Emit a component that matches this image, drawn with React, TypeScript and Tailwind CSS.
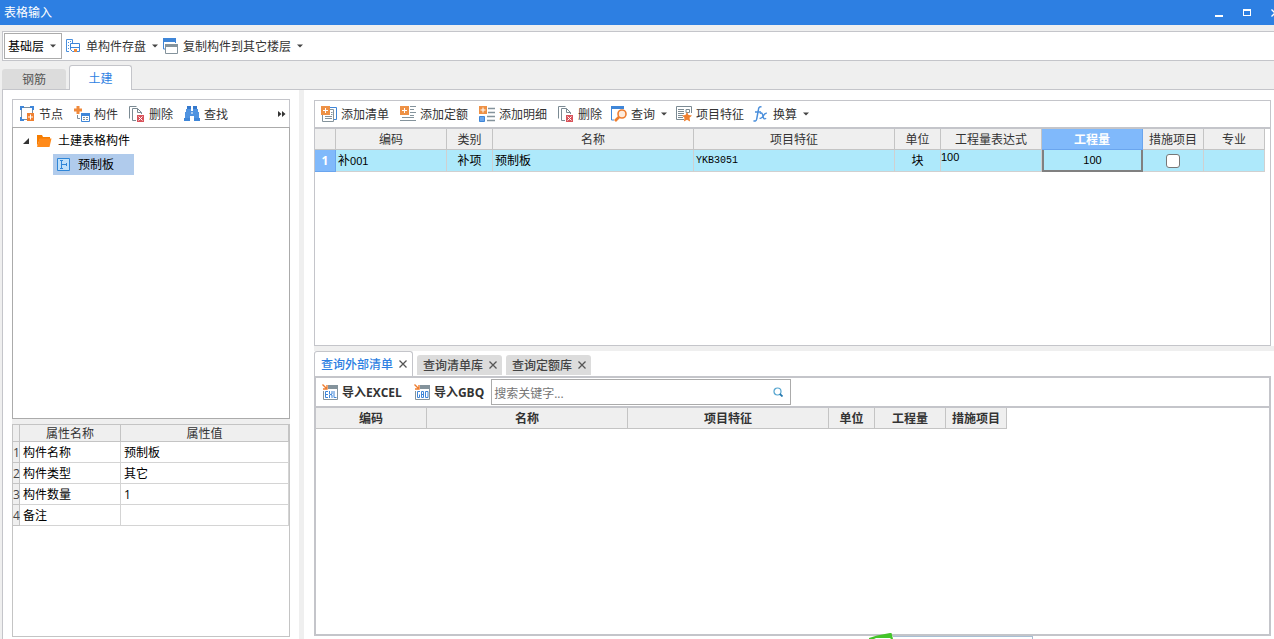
import React, { useState } from 'react';

interface IconProps {
  className?: string;
}

interface Column {
  label: string;
  width: string;
}

const Svg: React.FC<{ children: React.ReactNode; className?: string }> = ({ children, className = 'w-4 h-4' }) => (
  <svg viewBox="0 0 16 16" className={`${className} shrink-0`} fill="none" aria-hidden="true">
    {children}
  </svg>
);

const Caret: React.FC<IconProps> = ({ className = '' }) => (
  <svg viewBox="0 0 6 4" className={`w-1.5 h-1 shrink-0 ${className}`} aria-hidden="true">
    <path d="M0 0.5h6L3 3.5z" fill="#444" />
  </svg>
);

const SaveUnitIcon = () => (
  <Svg>
    <path d="M3 13.5H.5V1.500h6V5" stroke="#4a8fdc" />
    <path d="M2 4.500h1M2 7.500h1M2 10.500h1M4 3.500h1M4 6.500h1" stroke="#4a8fdc" />
    <path d="M4.500 5.500h9v8h-7l-2-2z" stroke="#3f86d8" fill="#fff" />
    <path d="M5 9.500h8" stroke="#3f86d8" />
    <path d="M8 11h3v3H8z" fill="#ee8a3a" />
  </Svg>
);

const CopyFloorIcon = () => (
  <Svg>
    <path d="M.5 1v10H2M12.500 1v4" stroke="#3f86d8" />
    <path d="M0 0h13v4H0z" fill="#3f86d8" />
    <path d="M2.500 6.500h12v9h-12z" stroke="#84939c" fill="#fff" />
    <path d="M2 6h13v3H2z" fill="#84939c" />
  </Svg>
);

const NodeIcon = () => (
  <Svg>
    <path d="M4 1.500h8M2.500 4v7M13.500 4v3M4 13.500h4" stroke="#7e8f9c" />
    <path d="M1 0h4v4H1zM11 0h4v4h-4zM1 11h4v4H1z" fill="#3f86d8" />
    <path d="M3 2h10v11H3z" fill="#fff" />
    <path d="M8 7h7v8H8z" fill="#f08030" />
    <path d="M11.500 8.500v5M9 11h5" stroke="#fff" />
  </Svg>
);

const ComponentIcon = () => (
  <Svg>
    <path d="M2.500 0h3v2.500H8v3H5.500V8h-3V5.500H0v-3h2.500z" fill="#f08a3c" />
    <path d="M3.500 9v3.500H6" stroke="#7e8f9c" />
    <path d="M7.500 7.500h8v8h-8z" stroke="#3f86d8" fill="#fff" />
    <path d="M7 7h9v3H7z" fill="#3f86d8" />
    <path d="M9 11.500h2M12 11.500h2M9 13.500h2M12 13.500h2" stroke="#84939c" />
  </Svg>
);

const DeleteIcon = () => (
  <Svg>
    <path d="M.5 12.500v-12h7" stroke="#7b8a93" />
    <path d="M7 14.500H3.500v-12h5l4 4V8M8.500 2.500v4h4" stroke="#7b8a93" />
    <path d="M8 9h7v7H8z" fill="#d9535b" />
    <path d="M9.500 10.500l4 4M13.500 10.500l-4 4" stroke="#fff" />
  </Svg>
);

const BinocularsIcon = () => (
  <Svg>
    <path d="M3 0h4v3H3zM9 0h4v3H9z" fill="#3478cc" />
    <path d="M2 3h5v2h2V3h5v3h1v9h-5v-5H6v5H1V6h1z" fill="#4f93e0" />
    <path d="M0 12h6v3H0zM10 12h6v3h-6z" fill="#3f86d8" />
    <path d="M7.500 6h1v2h-1z" fill="#fff" />
  </Svg>
);

const AddListIcon = () => (
  <Svg>
    <path d="M9 1.500h6.500v12H13" stroke="#3f86d8" />
    <path d="M9 3.500h3.500v12H1.500V9" stroke="#84939c" />
    <path d="M4 10.500h7M4 12.500h7M10 6.500h1.500M10 8.500h1.500" stroke="#84939c" />
    <path d="M0 0h9v9H0z" fill="#ee9145" />
    <path d="M4.500 2v5M2 4.500h5" stroke="#fff" />
  </Svg>
);

const AddQuotaIcon = () => (
  <Svg>
    <path d="M10 .5h6M10 3.500h4M10 6.500h6M10 9.500h4M2 11.500h12M0 14.500h16" stroke="#84939c" />
    <path d="M0 0h9v9H0z" fill="#ee9145" />
    <path d="M4.500 2v5M2 4.500h5" stroke="#fff" />
  </Svg>
);

const AddDetailIcon = () => (
  <Svg>
    <path d="M9 2.500h7M9 6.500h7M8 10.500h8M8 14.500h8" stroke="#84939c" strokeWidth="1.500" />
    <path d="M.5 10.500h5v5h-5z" fill="#69a5ec" stroke="#3f86d8" />
    <path d="M0 0h8v8H0z" fill="#ee9145" />
    <path d="M4 1.500v5M1.500 4h5" stroke="#fff" />
  </Svg>
);

const QueryIcon = () => (
  <Svg>
    <path d="M.5 1v13H3" stroke="#3f86d8" />
    <path d="M0 0h13v3H0z" fill="#3f86d8" />
    <circle cx="11" cy="8" r="4" stroke="#ee7d2f" strokeWidth="1.600" fill="#fdebdd" />
    <path d="M8 11L4 15" stroke="#ee7d2f" strokeWidth="2.600" />
  </Svg>
);

const FeatureIcon = () => (
  <Svg>
    <path d="M8 13.500H.5V.5h15V7" stroke="#7b8a93" />
    <path d="M2 3.500h6M2 5.500h6M2 7.500h6M2 9.500h5M2 11.500h5M10 3.500h3.500v3H10z" stroke="#7b8a93" />
    <path d="M11 6l1.500 3 3.500.5-2.500 2.300.6 3.700-3.100-1.800-3.100 1.800.6-3.700L6 9.500 9.500 9z" fill="#f08030" />
  </Svg>
);

const FunctionIcon = () => (
  <Svg>
    <path d="M8.500 1.200c-1.600-1-2.700 0-3 2L3.700 13c-.3 2-1.600 2.600-3.200 1.600M2 6h6" stroke="#4a8fdc" strokeWidth="1.500" />
    <path d="M6.800 7.500c1.200-1 2.200-.6 2.600.6l1.100 3.600c.4 1.400 1.400 1.500 2.600.5M13.800 7.300c-1.500-.6-2.500.8-3.500 2.600-.9 1.700-1.900 3-3.700 2.300" stroke="#4a8fdc" strokeWidth="1.400" />
  </Svg>
);

const FolderIcon = () => (
  <Svg>
    <path d="M1 13V2h5l1 2h7v2H4z" fill="#f57c00" />
    <path d="M3.500 5.500H15.500L13.500 14H1z" fill="#ff8a1a" />
  </Svg>
);

const SlabIcon = () => (
  <svg viewBox="0 0 13 13" className="h-[13px] w-[13px] shrink-0" fill="none" aria-hidden="true">
    <path d="M.5.5h12v12H.5z" stroke="#2f86d8" fill="#bfe0fa" />
    <path d="M3 2.500h3M3 10.500h3M4.500 3v7M5 6.500h5M9.500 5v3" stroke="#2f86d8" />
  </svg>
);

// The spreadsheet badge shared by the import buttons
const ImportIcon: React.FC<{ kind: 'EXL' | 'GBQ' }> = ({ kind }) => (
  <Svg>
    <path d="M6 1h10v4H6z" fill="#84939c" />
    <path d="M1.500 7v8.500h14V5" stroke="#84939c" />
    <path d="M.5.5l4 4M5 1v4H1" stroke="#ee7d2f" strokeWidth="1.400" />
    {kind === 'EXL' ? (
      <path d="M6 7.500H3.500v6H6M3.500 10.500H6M7.500 7v3l2.500 1v3M10 7v3l-2.500 1v3M12 7v6.500h2.500" stroke="#3f86d8" />
    ) : (
      <path d="M6 7.500H3.500v6h2v-3M7.500 7.500h2v6h-2zM7.500 10.500h2M11.500 7.500h2.500v6h-2.500z" stroke="#3f86d8" />
    )}
  </Svg>
);

const CloseIcon: React.FC<IconProps> = ({ className = '' }) => (
  <svg viewBox="0 0 8 8" className={`w-2 h-2 shrink-0 ${className}`} aria-hidden="true">
    <path d="M.5.5l7 7M7.500.5l-7 7" stroke="currentColor" strokeWidth="1.300" />
  </svg>
);

interface ToolButtonProps {
  icon: React.ReactNode;
  label: string;
  menu?: boolean;
}

const ToolButton: React.FC<ToolButtonProps> = ({ icon, label, menu }) => (
  <button type="button" className="flex items-center gap-1 whitespace-nowrap hover:text-[#2d7fe2]">
    {icon}
    <span className="pt-0.5">{label}</span>
    {menu && <Caret className="ml-0.5" />}
  </button>
);

const billColumns: Column[] = [
  { label: '', width: 'w-[21px]' },
  { label: '编码', width: 'w-[111px]' },
  { label: '类别', width: 'w-[46px]' },
  { label: '名称', width: 'w-[201px]' },
  { label: '项目特征', width: 'w-[201px]' },
  { label: '单位', width: 'w-[46px]' },
  { label: '工程量表达式', width: 'w-[101px]' },
  { label: '工程量', width: 'w-[101px]' },
  { label: '措施项目', width: 'w-[61px]' },
  { label: '专业', width: 'w-[61px]' },
];

const queryColumns: Column[] = [
  { label: '编码', width: 'w-[111px]' },
  { label: '名称', width: 'w-[201px]' },
  { label: '项目特征', width: 'w-[201px]' },
  { label: '单位', width: 'w-[46px]' },
  { label: '工程量', width: 'w-[71px]' },
  { label: '措施项目', width: 'w-[61px]' },
];

const properties = [
  { name: '构件名称', value: '预制板' },
  { name: '构件类型', value: '其它' },
  { name: '构件数量', value: '1' },
  { name: '备注', value: '' },
];

const queryTabs = ['查询外部清单', '查询清单库', '查询定额库'];

const TitleBar = () => (
  <header className="flex h-[25px] items-center justify-between overflow-hidden bg-[#2d7fe2] pl-1 text-white">
    <h1 className="text-xs">表格输入</h1>
    <div className="-mr-[5px] flex shrink-0 items-center gap-5">
      <button type="button" aria-label="最小化" className="flex h-2 w-2 items-end">
        <span className="h-0.5 w-2 bg-white" />
      </button>
      <button type="button" aria-label="最大化" className="h-[7px] w-2 border border-t-2 border-white" />
      <button type="button" aria-label="关闭" className="flex">
        <CloseIcon />
      </button>
    </div>
  </header>
);

const MainToolbar = () => (
  <div className="ml-0.5 mt-1.5 flex h-[30px] items-center border-y border-l border-[#c4c5ca] bg-white pl-px">
    <div className="relative mr-1 h-[26px] w-[58px]">
      <select
        aria-label="楼层"
        className="h-full w-full appearance-none rounded-none border border-[#ababab] bg-white pl-[3px] pt-0.5 text-black"
      >
        <option>基础层</option>
      </select>
      <Caret className="pointer-events-none absolute right-1.5 top-[11px]" />
    </div>
    <div className="flex items-center gap-[5px]">
      <ToolButton icon={<SaveUnitIcon />} label="单构件存盘" menu />
      <ToolButton icon={<CopyFloorIcon />} label="复制构件到其它楼层" menu />
    </div>
  </div>
);

const ComponentTree = () => (
  <div className="min-h-[292px] border border-[#ababab] py-0.5 text-black">
    <ul>
      <li>
        <button type="button" className="ml-2.5 flex h-[21px] items-center">
          <svg viewBox="0 0 6 6" className="mr-[7px] h-1.5 w-1.5" aria-hidden="true">
            <path d="M6 0v6H0z" fill="#333" />
          </svg>
          <FolderIcon />
          <span className="ml-1.5">土建表格构件</span>
        </button>
        <ul>
          <li>
            <button
              type="button"
              className="ml-10 mt-[3px] flex h-[21px] w-[81px] items-center gap-2 bg-[#b0cbec] pl-1"
            >
              <SlabIcon />
              预制板
            </button>
          </li>
        </ul>
      </li>
    </ul>
  </div>
);

const PropertyPanel = () => (
  <div className="flex-1 border border-[#c4c4c4] bg-white">
    <table className="w-full table-fixed border-separate border-spacing-0">
      <thead>
        <tr className="h-[17px] bg-[#efefef] leading-[14px]">
          <th className="w-[7px] border-b border-r border-[#c4c4c4] p-0" />
          <th className="w-[101px] border-b border-r border-[#c4c4c4] p-0 pt-0.5 font-normal">属性名称</th>
          <th className="border-b border-r border-[#c4c4c4] p-0 pt-0.5 font-normal">属性值</th>
        </tr>
      </thead>
      <tbody>
        {properties.map((property, i) => (
          <tr key={property.name} className="h-[21px] text-black">
            <th className="border-b border-r border-[#c4c4c4] bg-[#efefef] p-0 pt-0.5 text-left font-normal text-[#444]">
              {i + 1}
            </th>
            <td className="border-b border-r border-[#d4d4d4] p-0 pl-[3px] pt-0.5">{property.name}</td>
            <td className="border-b border-r border-[#d4d4d4] p-0 pl-[3px] pt-0.5">{property.value}</td>
          </tr>
        ))}
      </tbody>
    </table>
  </div>
);

const BillTable = () => {
  const [measure, setMeasure] = useState(false);
  const cell = 'border-b border-r border-[#d0d0d0] p-0';

  return (
    <table className="w-[950px] table-fixed border-separate border-spacing-0">
      <thead>
        <tr className="h-[21px]">
          {billColumns.map((column) => (
            <th
              key={column.label}
              className={`${column.width} border-b border-r p-0 pt-0.5 ${
                column.label === '工程量'
                  ? 'border-[#6aa5ee] bg-[#80b9fb] font-bold text-white'
                  : 'border-[#c4c4c4] bg-[#efefef] font-normal'
              }`}
            >
              {column.label}
            </th>
          ))}
        </tr>
      </thead>
      <tbody>
        <tr className="h-[22px] bg-[#aee9fb] text-black">
          <th className="border-b border-r border-[#6aa5ee] bg-[#80b9fb] p-0 text-white">1</th>
          <td className={`${cell} pl-0.5`}>
            补<span className="font-['Liberation_Sans'] text-[11px]">001</span>
          </td>
          <td className={`${cell} text-center`}>补项</td>
          <td className={`${cell} pl-0.5`}>预制板</td>
          <td className={`${cell} pl-0.5 font-['Liberation_Mono'] text-[10px]`}>YKB3051</td>
          <td className={`${cell} text-center`}>块</td>
          <td className={`${cell} align-top font-['Liberation_Sans'] text-[11px]`}>100</td>
          <td className="border-2 border-t-0 border-[#808080] p-0 text-center font-['Liberation_Sans'] text-[11px]">100</td>
          <td className={`${cell} text-center`}>
            <input
              type="checkbox"
              aria-label="措施项目"
              checked={measure}
              onChange={(e) => setMeasure(e.target.checked)}
              className="block mx-auto h-3.5 w-3.5 appearance-none rounded-[3px] border border-[#777] bg-white checked:bg-[#2d7fe2]"
            />
          </td>
          <td className={cell} />
        </tr>
      </tbody>
    </table>
  );
};

const QueryPanel = () => {
  const [activeTab, setActiveTab] = useState(queryTabs[0]);
  const [keyword, setKeyword] = useState('');

  return (
    <section className="flex flex-1 flex-col">
      <div className="flex h-[25px] items-end gap-1">
        {queryTabs.map((tab) => (
          <div
            key={tab}
            className={`flex items-center gap-1.5 pl-1.5 pr-[5px] font-medium ${
              tab === activeTab
                ? 'h-[25px] rounded-t-[3px] border border-b-0 border-[#c4c5ca] bg-white text-[#2d7fe2]'
                : 'mb-px h-5 rounded-t-[3px] bg-[#dcdcdc] text-[#444]'
            }`}
          >
            <button type="button" className="whitespace-nowrap pt-0.5" onClick={() => setActiveTab(tab)}>
              {tab}
            </button>
            <button type="button" aria-label={`关闭${tab}`} className="text-[#555]">
              <CloseIcon />
            </button>
          </div>
        ))}
      </div>

      <div className="flex-1 border-2 border-[#c4c5ca]">
        <div className="flex h-[30px] items-center border-b-2 border-[#c4c5ca] pl-1.5 font-bold">
          <div className="flex shrink-0 items-center gap-3">
            <ToolButton icon={<ImportIcon kind="EXL" />} label="导入EXCEL" />
            <ToolButton icon={<ImportIcon kind="GBQ" />} label="导入GBQ" />
          </div>
          <div className="relative ml-[7px] h-[26px] w-[300px]">
            <input
              type="text"
              aria-label="搜索关键字"
              placeholder="搜索关键字..."
              value={keyword}
              onChange={(e) => setKeyword(e.target.value)}
              className="h-full w-full border border-[#ababab] pl-0.5 pr-6 pt-0.5 font-normal placeholder:text-[#757575]"
            />
            <svg viewBox="0 0 10 10" className="absolute right-2 top-2 h-2.5 w-2.5" fill="none" aria-hidden="true">
              <circle cx="4.500" cy="4.500" r="3.500" stroke="#55a5cf" strokeWidth="1.200" />
              <path d="M6.800 6.800l2.700 2.700" stroke="#2377ae" strokeWidth="1.800" />
            </svg>
          </div>
        </div>
        <table className="w-[691px] table-fixed border-separate border-spacing-0">
          <thead>
            <tr className="h-[21px] bg-[#efefef]">
              {queryColumns.map((column) => (
                <th key={column.label} className={`${column.width} border-b border-r border-[#c4c4c4] p-0 pt-0.5 font-bold`}>
                  {column.label}
                </th>
              ))}
            </tr>
          </thead>
        </table>
      </div>
    </section>
  );
};

export default function App() {
  return (
    <div className="relative flex min-h-screen flex-col overflow-hidden bg-[#efefef] font-['Open_Sans','Noto_Sans_CJK_SC',sans-serif] text-xs text-[#333]">
      <TitleBar />
      <MainToolbar />

      {/* Discipline tabs */}
      <nav className="ml-0.5 mt-1 flex h-6 items-end gap-[3px]">
        <button type="button" className="h-5 w-16 rounded-t-[3px] bg-[#dcdcdc] pt-0.5 text-[#555]">
          钢筋
        </button>
        <button
          type="button"
          className="z-10 -mb-px h-[25px] w-[63px] rounded-t-[3px] border border-b-0 border-[#c4c5ca] bg-white pt-0.5 text-[#2d7fe2]"
        >
          土建
        </button>
      </nav>

      <main className="ml-0.5 flex flex-1 border-l border-t border-[#c4c5ca] bg-white">
        <aside className="flex w-[296px] shrink-0 flex-col px-[9px] pb-0.5 pt-[9px]">
          <div className="flex h-7 items-center justify-between border border-b-0 border-[#c4c5ca] pl-1.5 pr-[3px] pt-px">
            <div className="flex items-center gap-[11px]">
              <ToolButton icon={<NodeIcon />} label="节点" />
              <ToolButton icon={<ComponentIcon />} label="构件" />
              <ToolButton icon={<DeleteIcon />} label="删除" />
              <ToolButton icon={<BinocularsIcon />} label="查找" />
            </div>
            <button type="button" aria-label="更多">
              <svg viewBox="0 0 8 6" className="h-1.5 w-2" aria-hidden="true">
                <path d="M0 0l3.500 3L0 6zM4 0l3.500 3L4 6z" fill="#333" />
              </svg>
            </button>
          </div>
          <ComponentTree />
          <div className="h-[5px] bg-[#efefef]" />
          <PropertyPanel />
        </aside>

        <div className="w-[5px] shrink-0 bg-[#efefef]" />

        <div className="flex min-w-0 flex-1 flex-col pb-[3px] pl-2.5 pt-2.5">
          <section className="mr-[3px] min-h-[246px] border border-[#c4c5ca]">
            <div className="flex h-7 items-center gap-[9px] border-b-2 border-[#c4c5ca] pl-1.5">
              <div className="flex items-center gap-[11px]">
                <ToolButton icon={<AddListIcon />} label="添加清单" />
                <ToolButton icon={<AddQuotaIcon />} label="添加定额" />
                <ToolButton icon={<AddDetailIcon />} label="添加明细" />
                <ToolButton icon={<DeleteIcon />} label="删除" />
              </div>
              <ToolButton icon={<QueryIcon />} label="查询" menu />
              <ToolButton icon={<FeatureIcon />} label="项目特征" />
              <ToolButton icon={<FunctionIcon />} label="换算" menu />
            </div>
            <BillTable />
          </section>
          <div className="h-[5px] bg-[#efefef]" />
          <div className="mr-[3px] flex flex-1 flex-col">
            <QueryPanel />
          </div>
        </div>
      </main>

      {/* Top edge of the floating input bar */}
      <div className="absolute bottom-0 right-[241px] flex h-1.5 items-end">
        <svg viewBox="0 0 24 6" className="h-1.5 w-6" aria-hidden="true">
          <path d="M0 5L8 2.500 21 0h1.500L24 6h-2l-1-1H7l-2 1H0z" fill="#45c42a" />
        </svg>
        <div className="h-[3px] w-[140px] border-r border-t border-[#a9bfd3] bg-white" />
      </div>
    </div>
  );
}
